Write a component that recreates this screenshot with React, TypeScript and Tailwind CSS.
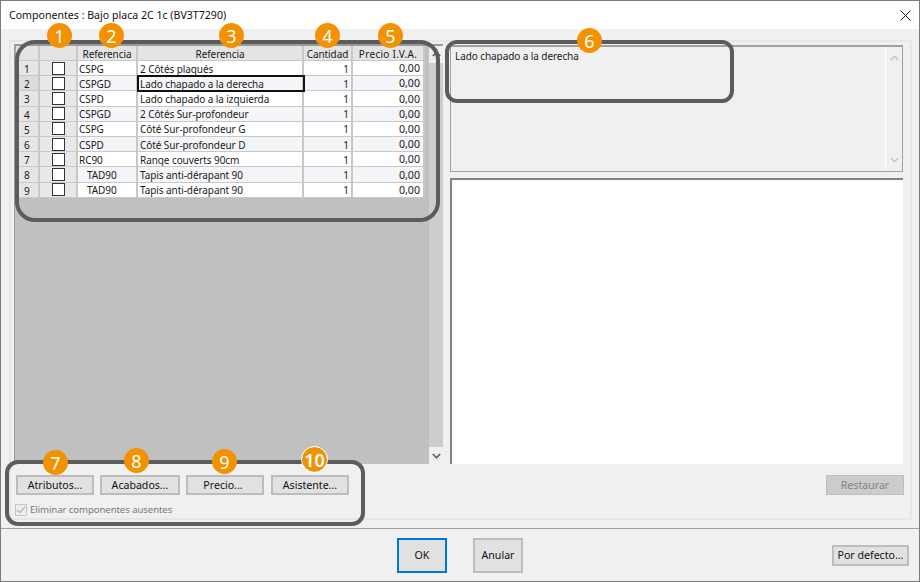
import React from "react";

const rows = [
  { ref: "CSPG", label: "2 Côtés plaqués" },
  { ref: "CSPGD", label: "Lado chapado a la derecha" },
  { ref: "CSPD", label: "Lado chapado a la izquierda" },
  { ref: "CSPGD", label: "2 Côtés Sur-profondeur" },
  { ref: "CSPG", label: "Côté Sur-profondeur G" },
  { ref: "CSPD", label: "Côté Sur-profondeur D" },
  { ref: "RC90", label: "Range couverts 90cm" },
  { ref: "TAD90", label: "Tapis anti-dérapant 90", child: true },
  { ref: "TAD90", label: "Tapis anti-dérapant 90", child: true },
];

const badges = [
  { n: "1", c: "left-[46px] top-[22px]" },
  { n: "2", c: "left-[98px] top-[22px]" },
  { n: "3", c: "left-[218px] top-[22px]" },
  { n: "4", c: "left-[314px] top-[22px]" },
  { n: "5", c: "left-[377px] top-[22px]" },
  { n: "6", c: "left-[576px] top-[27px]" },
  { n: "7", c: "left-[42px] top-[449px]" },
  { n: "8", c: "left-[123px] top-[447px]" },
  { n: "9", c: "left-[211px] top-[448px]" },
  { n: "10", c: "left-[301px] top-[446px] text-[13px] font-semibold outline outline-1 outline-white" },
];

const Chevron = ({ up = false, className = "" }: { up?: boolean; className?: string }) => (
  <svg width="9" height="6" viewBox="0 0 9 6" className={className}>
    <polyline
      points={up ? "0.8,5 4.5,1.3 8.2,5" : "0.8,1 4.5,4.7 8.2,1"}
      fill="none"
      stroke="currentColor"
      strokeWidth="1.6"
    />
  </svg>
);

const Btn = ({ children, className = "" }: { children: React.ReactNode; className?: string }) => (
  <div className={`flex items-center justify-center bg-[#e1e1e1] border-2 border-[#bdbdbd] text-[#111] text-[10.6px] tracking-normal ${className}`}>
    {children}
  </div>
);

const headCell = "flex items-center justify-center bg-[#e4e4e4] border-r-2 border-b border-[#c8c8c8] overflow-hidden whitespace-nowrap pt-[2px]";

const Grid = () => (
  <div className="grid grid-cols-[24px_38px_60px_166px_49px_72px] grid-rows-[15px_repeat(9,15.2px)] w-[409px] border-l border-[#a8a8a8]">
    <div className={headCell} />
    <div className={headCell} />
    <div className={headCell}>Referencia</div>
    <div className={headCell}>Referencia</div>
    <div className={headCell}>Cantidad</div>
    <div className={`${headCell} tracking-[0.3px]`}>Precio I.V.A.</div>
    {rows.map((r, i) => {
      const bg = i % 2 === 1 ? "bg-[#f3f5f8]" : "bg-white";
      const cell = `flex items-center border-r-2 border-b border-[#c8c8c8] overflow-hidden whitespace-nowrap pt-[1px] ${bg}`;
      return (
        <React.Fragment key={i}>
          <div className={`flex items-center pl-[8px] border-r-2 border-b border-[#c8c8c8] pt-[2px] ${i === 1 ? "bg-[#dcdcdc]" : "bg-[#e6e6e6]"}`}>
            {i + 1}
          </div>
          <div className="flex items-center justify-center bg-[#e8e8e8] border-r-2 border-b border-[#c8c8c8]">
            <div className="w-[13px] h-[13px] bg-white border border-[#333]" />
          </div>
          <div className={`${cell} ${r.child ? "pl-[9px]" : "pl-[1px]"}`}>{r.ref}</div>
          <div className={`${cell} pl-[2px] ${i === 1 ? "relative z-10 outline-2 outline-[#111] -outline-offset-1" : ""}`}>{r.label}</div>
          <div className={`${cell} justify-end pr-[2px]`}>1</div>
          <div className={`${cell} justify-end pr-[3px] text-[10.6px] tracking-normal`}>0,00</div>
        </React.Fragment>
      );
    })}
  </div>
);

export default function App() {
  return (
    <div className="relative flex flex-col w-[920px] h-[582px] bg-[#f0f0f0] border border-[#7a7a7a] text-[10px] tracking-[-0.08px] leading-none text-[#1a1a1a] overflow-hidden font-['Noto_Sans',sans-serif]">
      {/* title bar */}
      <div className="flex items-center justify-between h-[28px] bg-white pl-[8px] pr-[8px] shrink-0">
        <span className="text-[10.6px] tracking-normal text-[#111]">Componentes : Bajo placa 2C 1c (BV3T7290)</span>
        <svg width="11" height="11" viewBox="0 0 11 11">
          <path d="M0.5 0.5 L10.5 10.5 M10.5 0.5 L0.5 10.5" stroke="#111" strokeWidth="1" />
        </svg>
      </div>

      {/* tab page */}
      <div className="mt-[11px] ml-[8px] w-[903px] h-[480px] shrink-0 flex flex-col border-2 border-[#e6e6e6]">
        <div className="flex h-[420px] shrink-0 mt-[2px] ml-[3px]">
          <div className="flex w-[429px] border-t-2 border-l border-[#9a9a9a]">
            <div className="w-[414px] bg-[#c0c0c0]">
              <Grid />
            </div>
            <div className="flex flex-col items-center w-[14px] bg-[#f0f0f0] text-[#555]">
              <Chevron up className="mt-[5px] mb-[6px]" />
              <div className="w-full flex-1 bg-[#cdcdcd]" />
              <Chevron className="mt-[6px] mb-[5px]" />
            </div>
          </div>
          <div className="flex flex-col w-[453px] ml-[7px] mt-[1px]">
            <div className="flex h-[127px] border border-[#a0a0a0] border-t-2">
              <div className="flex-1 pl-[4px] pt-[4px]">Lado chapado a la derecha</div>
              <div className="flex flex-col items-center justify-between w-[17px] border-l border-white py-[8px] text-[#c4c4c4]">
                <Chevron up />
                <Chevron />
              </div>
            </div>
            <div className="h-[286px] mt-[6px] bg-white border-t-2 border-l-2 border-[#808080]" />
          </div>
        </div>

        <div className="flex items-start justify-between ml-[5px] mt-[11px]">
          <div className="flex flex-col">
            <div className="flex">
              <Btn className="w-[78px] h-[20px]">Atributos...</Btn>
              <Btn className="w-[80px] h-[20px] ml-[6px]">Acabados...</Btn>
              <Btn className="w-[78px] h-[20px] ml-[6px]"><span className="mr-[4px]">Precio...</span></Btn>
              <Btn className="w-[78px] h-[20px] ml-[7px]">Asistente...</Btn>
            </div>
            <div className="flex items-center mt-[9px] -ml-[1px] text-[#7a7a7a]">
              <div className="flex items-center justify-center w-[12px] h-[12px] border border-[#c6c6c6] bg-[#eeeeee]">
                <svg width="10" height="8" viewBox="0 0 11 9">
                  <polyline points="1,4.5 4,7.5 10,1" fill="none" stroke="#b4b4b4" strokeWidth="1.4" />
                </svg>
              </div>
              <span className="ml-[3px] text-[9.6px]">Eliminar componentes ausentes</span>
            </div>
          </div>
          <div className="flex items-center justify-center w-[78px] h-[20px] mr-[6px] bg-[#cccccc] border border-[#bfbfbf] text-[#838383] text-[10.6px] tracking-normal">
            Restaurar
          </div>
        </div>
      </div>

      {/* footer */}
      <div className="flex items-start flex-1 mt-[8px] border-t border-[#a0a0a0] pl-[396px] pr-[10px] pt-[9px]">
        <Btn className="w-[50px] h-[35px] !border-[#0078d7]">OK</Btn>
        <Btn className="w-[50px] h-[35px] ml-[26px]">Anular</Btn>
        <Btn className="w-[77px] h-[21px] ml-auto mt-[7px]">Por defecto...</Btn>
      </div>

      {/* callouts */}
      <div className="absolute left-[14px] top-[39px] w-[425px] h-[182px] rounded-[20px] border-4 border-[#5c5c5c]" />
      <div className="absolute left-[444px] top-[39px] w-[289px] h-[63px] rounded-[12px] border-4 border-[#5c5c5c]" />
      <div className="absolute left-[4px] top-[459px] w-[360px] h-[66px] rounded-[13px] border-4 border-[#5c5c5c]" />
      {badges.map((b) => (
        <div
          key={b.n}
          className={`absolute flex items-center justify-center w-[25px] h-[25px] rounded-full bg-[#f39200] text-white text-[18px] tracking-normal ${b.c}`}
        >
          {b.n}
        </div>
      ))}
    </div>
  );
}
